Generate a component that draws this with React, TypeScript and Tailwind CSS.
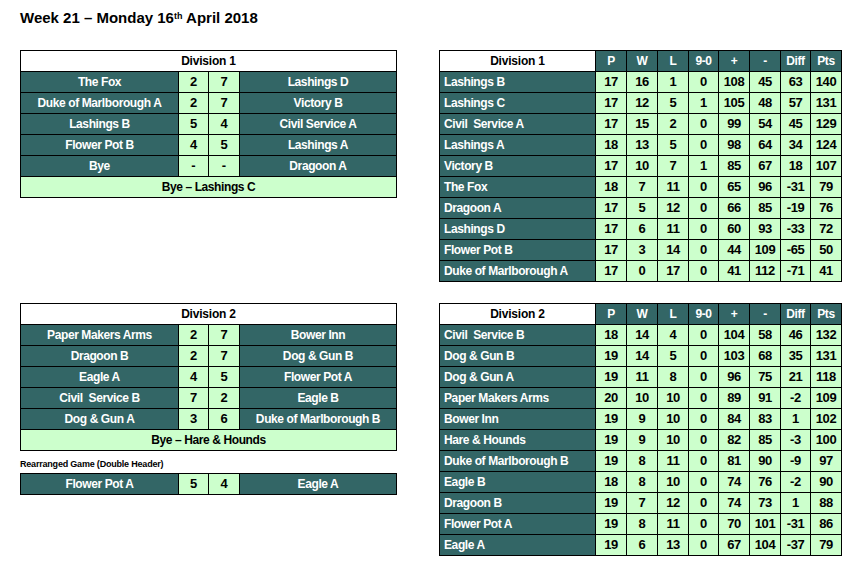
import { FC } from "react";

const TEAL = "bg-[#336666]";
const GREEN = "bg-[#ccffcc]";

type Fixture = [string, string, string, string];
type Standing = [string, number, number, number, number, number, number, number, number];

const div1Fixtures: Fixture[] = [
  ["The Fox", "2", "7", "Lashings D"],
  ["Duke of Marlborough A", "2", "7", "Victory B"],
  ["Lashings B", "5", "4", "Civil Service A"],
  ["Flower Pot B", "4", "5", "Lashings A"],
  ["Bye", "-", "-", "Dragoon A"],
];

const div2Fixtures: Fixture[] = [
  ["Paper Makers Arms", "2", "7", "Bower Inn"],
  ["Dragoon B", "2", "7", "Dog & Gun B"],
  ["Eagle A", "4", "5", "Flower Pot A"],
  ["Civil  Service B", "7", "2", "Eagle B"],
  ["Dog & Gun A", "3", "6", "Duke of Marlborough B"],
];

const div1Table: Standing[] = [
  ["Lashings B", 17, 16, 1, 0, 108, 45, 63, 140],
  ["Lashings C", 17, 12, 5, 1, 105, 48, 57, 131],
  ["Civil  Service A", 17, 15, 2, 0, 99, 54, 45, 129],
  ["Lashings A", 18, 13, 5, 0, 98, 64, 34, 124],
  ["Victory B", 17, 10, 7, 1, 85, 67, 18, 107],
  ["The Fox", 18, 7, 11, 0, 65, 96, -31, 79],
  ["Dragoon A", 17, 5, 12, 0, 66, 85, -19, 76],
  ["Lashings D", 17, 6, 11, 0, 60, 93, -33, 72],
  ["Flower Pot B", 17, 3, 14, 0, 44, 109, -65, 50],
  ["Duke of Marlborough A", 17, 0, 17, 0, 41, 112, -71, 41],
];

const div2Table: Standing[] = [
  ["Civil  Service B", 18, 14, 4, 0, 104, 58, 46, 132],
  ["Dog & Gun B", 19, 14, 5, 0, 103, 68, 35, 131],
  ["Dog & Gun A", 19, 11, 8, 0, 96, 75, 21, 118],
  ["Paper Makers Arms", 20, 10, 10, 0, 89, 91, -2, 109],
  ["Bower Inn", 19, 9, 10, 0, 84, 83, 1, 102],
  ["Hare & Hounds", 19, 9, 10, 0, 82, 85, -3, 100],
  ["Duke of Marlborough B", 19, 8, 11, 0, 81, 90, -9, 97],
  ["Eagle B", 18, 8, 10, 0, 74, 76, -2, 90],
  ["Dragoon B", 19, 7, 12, 0, 74, 73, 1, 88],
  ["Flower Pot A", 19, 8, 11, 0, 70, 101, -31, 86],
  ["Eagle A", 19, 6, 13, 0, 67, 104, -37, 79],
];

const cell = "border border-black p-0 align-middle";
const teamCls = `${cell} ${TEAL} text-white text-[12px] font-bold tracking-[-0.4px] text-center whitespace-pre`;
const scoreCls = `${cell} ${GREEN} text-black text-[13px] font-bold text-center`;

const FixtureRow: FC<{ f: Fixture }> = ({ f }) => (
  <tr className="h-[21px]">
    <td className={teamCls}>{f[0]}</td>
    <td className={scoreCls}>{f[1]}</td>
    <td className={scoreCls}>{f[2]}</td>
    <td className={teamCls}>{f[3]}</td>
  </tr>
);

const FixtureCols = () => (
  <colgroup>
    <col className="w-[158px]" />
    <col className="w-[30px]" />
    <col className="w-[31px]" />
    <col className="w-[157px]" />
  </colgroup>
);

const Fixtures: FC<{ title: string; rows: Fixture[]; bye: string }> = ({ title, rows, bye }) => (
  <table className="w-[376px] table-fixed border-collapse">
    <FixtureCols />
    <tbody>
      <tr className="h-[21px]">
        <td colSpan={4} className={`${cell} bg-white text-black text-[12px] font-bold text-center tracking-[-0.2px]`}>
          {title}
        </td>
      </tr>
      {rows.map((f, i) => (
        <FixtureRow key={i} f={f} />
      ))}
      <tr className="h-[21px]">
        <td colSpan={4} className={`${cell} ${GREEN} text-black text-[12px] font-bold text-center tracking-[-0.4px]`}>
          {bye}
        </td>
      </tr>
    </tbody>
  </table>
);

const heads = ["P", "W", "L", "9-0", "+", "-", "Diff", "Pts"];

const League: FC<{ title: string; rows: Standing[] }> = ({ title, rows }) => (
  <table className="w-[402px] table-fixed border-collapse">
    <colgroup>
      <col className="w-[156px]" />
      <col className="w-[31px]" />
      <col className="w-[31px]" />
      <col className="w-[31px]" />
      <col className="w-[30px]" />
      <col className="w-[31px]" />
      <col className="w-[31px]" />
      <col className="w-[30px]" />
      <col className="w-[31px]" />
    </colgroup>
    <tbody>
      <tr className="h-[21px]">
        <td className={`${cell} bg-white text-black text-[12px] font-bold text-center tracking-[-0.2px]`}>{title}</td>
        {heads.map((h) => (
          <td key={h} className={`${cell} ${TEAL} text-white text-[12px] font-bold text-center tracking-[-0.4px]`}>
            {h}
          </td>
        ))}
      </tr>
      {rows.map((r, i) => (
        <tr key={i} className="h-[21px]">
          <td className={`${cell} ${TEAL} text-white text-[12px] font-bold tracking-[-0.4px] pl-[4px] whitespace-pre`}>
            {r[0]}
          </td>
          {r.slice(1).map((v, j) => (
            <td key={j} className={`${cell} ${GREEN} text-black text-[13px] font-bold text-center tracking-[-0.4px]`}>
              {v}
            </td>
          ))}
        </tr>
      ))}
    </tbody>
  </table>
);

const App: FC = () => {
  return (
    <div className="w-[865px] h-[575px] bg-white font-['Liberation_Sans',Arial,sans-serif] pl-[20px] pt-[9px]">
      <h1 className="text-[15px] leading-[18px] font-bold text-black">
        Week 21 – Monday 16<sup className="text-[9px]">th</sup> April 2018
      </h1>

      <div className="flex items-start gap-[42px] mt-[23px]">
        <Fixtures title="Division 1" rows={div1Fixtures} bye="Bye – Lashings C" />
        <League title="Division 1" rows={div1Table} />
      </div>

      <div className="flex items-start gap-[42px] mt-[21px]">
        <div className="flex flex-col">
          <Fixtures title="Division 2" rows={div2Fixtures} bye="Bye – Hare & Hounds" />
          <p className="text-[9px] font-bold tracking-[-0.2px] text-black leading-[11px] mt-[8px] mb-[3px]">
            Rearranged Game (Double Header)
          </p>
          <table className="w-[376px] table-fixed border-collapse">
            <FixtureCols />
            <tbody>
              <FixtureRow f={["Flower Pot A", "5", "4", "Eagle A"]} />
            </tbody>
          </table>
        </div>
        <League title="Division 2" rows={div2Table} />
      </div>
    </div>
  );
};

export default App;
